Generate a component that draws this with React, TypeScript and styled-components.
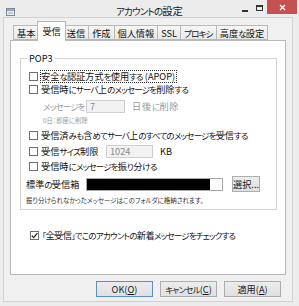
import React from "react";
import styled, { createGlobalStyle } from "styled-components";

const Global = createGlobalStyle`
  html, body { margin: 0; padding: 0; background: #ffffff; }
  body {
    font-family: "Noto Sans CJK JP", "Noto Sans", sans-serif;
    font-size: 9.2px;
    color: #111;
    font-feature-settings: "palt";
  }
  * { box-sizing: border-box; }
`;

/* Kana are set narrower than kanji, as in the Meiryo UI original */
const Kana = styled.span`
  font-size: 0.92em;
  letter-spacing: -0.09em;
`;

const KANA_RUN = /([\u3000-\u30ff\uff08\uff09\uff1a]+)/;

function JP({ children }: { children: string }) {
  return (
    <>
      {children.split(KANA_RUN).map((part, i) =>
        i % 2 ? <Kana key={i}>{part}</Kana> : part
      )}
    </>
  );
}

const Window = styled.div`
  width: 299px;
  height: 306px;
  background: #ececec;
  display: flex;
  flex-direction: column;
  overflow: hidden;
`;

const TitleBar = styled.div`
  height: 17px;
  display: grid;
  grid-template-columns: 1fr auto 1fr;
  align-items: start;
`;

const TitleIcon = styled.div`
  padding: 8px 0 0 6px;
  display: flex;
`;

const TitleText = styled.div`
  font-size: 10.4px;
  line-height: 11px;
  padding-top: 5px;
  color: #1a1a1a;
  white-space: nowrap;
`;

const Controls = styled.div`
  display: flex;
  justify-content: flex-end;
  padding-right: 2px;
`;

const CtrlButton = styled.div<{ $w: number; $close?: boolean }>`
  width: ${(p) => p.$w}px;
  height: 14px;
  display: flex;
  align-items: center;
  justify-content: center;
  background: ${(p) => (p.$close ? "#c75050" : "transparent")};
`;

const MinGlyph = styled.div`
  width: 6px;
  height: 2px;
  margin-top: 8px;
  background: #333;
`;

const MaxGlyph = styled.div`
  width: 7px;
  height: 6px;
  margin-top: 2px;
  border: 1px solid #333;
  border-top-width: 2px;
`;

const Client = styled.div`
  flex: 1;
  margin: 0 6px 4px 3px;
  background: #f0f0f0;
  border: 1px solid #d0d0d0;
  display: flex;
  flex-direction: column;
`;

const TabStrip = styled.div`
  margin-top: 3px;
  height: 19px;
  padding-left: 9px;
  display: flex;
  align-items: flex-end;
`;

const Tab = styled.div<{ $active?: boolean }>`
  position: relative;
  height: ${(p) => (p.$active ? 20 : 15)}px;
  margin: ${(p) => (p.$active ? "0 -2px -1px -2px" : "0 0 0 -1px")};
  padding: ${(p) => (p.$active ? "2px 4px 0" : "0 3px")};
  line-height: 14px;
  border: 1px solid #b8b8b8;
  border-bottom: ${(p) => (p.$active ? "none" : "1px solid #b8b8b8")};
  background: ${(p) =>
    p.$active ? "#ffffff" : "linear-gradient(#f6f6f6, #e8e8e8)"};
  z-index: ${(p) => (p.$active ? 1 : 0)};
  white-space: nowrap;
  &:first-child { margin-left: 0; }
`;

const Panel = styled.div`
  margin: 0 6px;
  height: 235px;
  background: #ffffff;
  border: 1px solid #b8b8b8;
  padding: 12px 8px 0 9px;
  display: flex;
  flex-direction: column;
`;

const Group = styled.fieldset`
  margin: 0;
  min-width: 0;
  padding: 0 6px 4px 5px;
  border: 1px solid #d3d3d3;
  display: flex;
  flex-direction: column;
`;

const Legend = styled.legend`
  padding: 0 2px;
  margin-left: 1px;
  line-height: 10px;
  height: 10px;
`;

const Row = styled.div<{ $mt?: number; $h: number; $indent?: number }>`
  display: flex;
  align-items: center;
  margin-top: ${(p) => p.$mt ?? 0}px;
  height: ${(p) => p.$h}px;
  padding-left: ${(p) => p.$indent ?? 0}px;
  white-space: nowrap;
`;

const Box = styled.span`
  width: 9px;
  height: 9px;
  flex: none;
  border: 1px solid #6f6f6f;
  background: #fff;
  margin-right: 3px;
  display: flex;
  align-items: center;
  justify-content: center;
`;

const Label = styled.span<{
  $w?: number;
  $muted?: boolean;
  $focus?: boolean;
  $ls?: number;
}>`
  display: inline-block;
  flex: none;
  width: ${(p) => (p.$w ? `${p.$w}px` : "auto")};
  color: ${(p) => (p.$muted ? "#9a9a9a" : "#111")};
  line-height: 11px;
  letter-spacing: ${(p) => p.$ls ?? 0}px;
  border: ${(p) => (p.$focus ? "1px dotted #333" : "none")};
  padding: ${(p) => (p.$focus ? "0 1px 0 0" : "0")};
  margin-left: ${(p) => (p.$focus ? "-1px" : "0")};
`;

const Note = styled.span<{ $muted?: boolean; $fs: number }>`
  font-size: ${(p) => p.$fs}px;
  line-height: 10px;
  color: ${(p) => (p.$muted ? "#9a9a9a" : "#333")};
`;

const Field = styled.div<{ $w: number; $disabled?: boolean }>`
  width: ${(p) => p.$w}px;
  height: 13px;
  flex: none;
  border: 1px solid ${(p) => (p.$disabled ? "#cfcfcf" : "#a8a8a8")};
  background: ${(p) => (p.$disabled ? "#f2f2f2" : "#ffffff")};
  color: #8a8a8a;
  padding: 0 0 0 3px;
  line-height: 11px;
  display: flex;
  align-items: center;
`;

const Redacted = styled.div`
  width: 123px;
  height: 11px;
  margin-left: -3px;
  background: #000;
`;

const Spacer = styled.span<{ $w: number }>`
  display: inline-block;
  width: ${(p) => p.$w}px;
  flex: none;
`;

const Button = styled.div<{ $w: number; $h: number; $default?: boolean }>`
  width: ${(p) => p.$w}px;
  height: ${(p) => p.$h}px;
  flex: none;
  border: 1px solid ${(p) => (p.$default ? "#5a8fc8" : "#adadad")};
  background: linear-gradient(#ececec, #e0e0e0);
  display: flex;
  align-items: center;
  justify-content: center;
  line-height: 10px;
  color: #1a1a1a;
  white-space: nowrap;
`;

const U = styled.span`
  text-decoration: underline;
`;

const CheckedRow = styled.div`
  margin: 19px 0 0 10px;
  height: 13px;
  display: flex;
  align-items: center;
  white-space: nowrap;
`;

const ButtonRow = styled.div`
  margin-top: 6px;
  height: 16px;
  padding-right: 11px;
  display: flex;
  justify-content: flex-end;
  gap: 7px;
`;

const tabs = ["基本", "受信", "送信", "作成", "個人情報", "SSL", "プロキシ", "高度な設定"];

export default function App() {
  return (
    <>
      <Global />
      <Window>
        <TitleBar>
          <TitleIcon>
            <svg width="9" height="8" viewBox="0 0 9 8">
              <rect x="0.5" y="0.5" width="8" height="7" fill="#e8edf2" stroke="#7d8a99" />
              <rect x="1" y="1" width="7" height="2" fill="#8fa6bf" />
              <rect x="2" y="4" width="5" height="2" fill="#c2ccd6" />
            </svg>
          </TitleIcon>
          <TitleText>
            <JP>アカウントの設定</JP>
          </TitleText>
          <Controls>
            <CtrlButton $w={15}>
              <MinGlyph />
            </CtrlButton>
            <CtrlButton $w={15}>
              <MaxGlyph />
            </CtrlButton>
            <CtrlButton $w={30} $close>
              <svg width="7" height="7" viewBox="0 0 7 7">
                <path d="M1 1 L6 6 M6 1 L1 6" stroke="#fff" strokeWidth="1.4" />
              </svg>
            </CtrlButton>
          </Controls>
        </TitleBar>
        <Client>
          <TabStrip>
            {tabs.map((t) => (
              <Tab key={t} $active={t === "受信"}>
                <JP>{t}</JP>
              </Tab>
            ))}
          </TabStrip>
          <Panel>
            <Group>
              <Legend>POP3</Legend>
              <Row $mt={7} $h={13} $indent={3}>
                <Box />
                <Label $focus>
                  <JP>安全な認証方式を使用する (APOP)</JP>
                </Label>
              </Row>
              <Row $h={13} $indent={3}>
                <Box />
                <Label>
                  <JP>受信時にサーバ上のメッセージを削除する</JP>
                </Label>
              </Row>
              <Row $mt={4} $h={13} $indent={17}>
                <Label $w={43} $muted>
                  <JP>メッセージを</JP>
                </Label>
                <Field $w={39} $disabled>
                  7
                </Field>
                <Spacer $w={7} />
                <Label $muted $ls={0.8}>
                  <JP>日後に削除</JP>
                </Label>
              </Row>
              <Row $mt={3} $h={10} $indent={17}>
                <Note $muted $fs={6.4}>
                  0日：即座に削除
                </Note>
              </Row>
              <Row $mt={3} $h={13} $indent={3}>
                <Box />
                <Label>
                  <JP>受信済みも含めてサーバ上のすべてのメッセージを受信する</JP>
                </Label>
              </Row>
              <Row $mt={2} $h={14} $indent={3}>
                <Box />
                <Label $w={65}>
                  <JP>受信サイズ制限</JP>
                </Label>
                <Field $w={47} $disabled>
                  1024
                </Field>
                <Spacer $w={7} />
                <Label>KB</Label>
              </Row>
              <Row $mt={2} $h={13} $indent={3}>
                <Box />
                <Label>
                  <JP>受信時にメッセージを振り分ける</JP>
                </Label>
              </Row>
              <Row $mt={3} $h={16}>
                <Label $w={60}>
                  <JP>標準の受信箱</JP>
                </Label>
                <Field $w={137}>
                  <Redacted />
                </Field>
                <Spacer $w={9} />
                <Button $w={28} $h={16}>
                  <JP>選択...</JP>
                </Button>
              </Row>
              <Row $mt={3} $h={10}>
                <Note $fs={6.5}>振り分けられなかったメッセージはこのフォルダに格納されます。</Note>
              </Row>
            </Group>
            <CheckedRow>
              <Box>
                <svg width="7" height="7" viewBox="0 0 7 7">
                  <path d="M0.8 3.6 L2.7 5.6 L6.3 1.2" fill="none" stroke="#222" strokeWidth="1.3" />
                </svg>
              </Box>
              <Label $ls={-0.55}>
                <JP>「全受信」でこのアカウントの新着メッセージをチェックする</JP>
              </Label>
            </CheckedRow>
          </Panel>
          <ButtonRow>
            <Button $w={57} $h={16} $default>
              OK(<U>O</U>)
            </Button>
            <Button $w={57} $h={16}>
              <JP>キャンセル</JP>(<U>C</U>)
            </Button>
            <Button $w={57} $h={16}>
              <JP>適用</JP>(<U>A</U>)
            </Button>
          </ButtonRow>
        </Client>
      </Window>
    </>
  );
}
